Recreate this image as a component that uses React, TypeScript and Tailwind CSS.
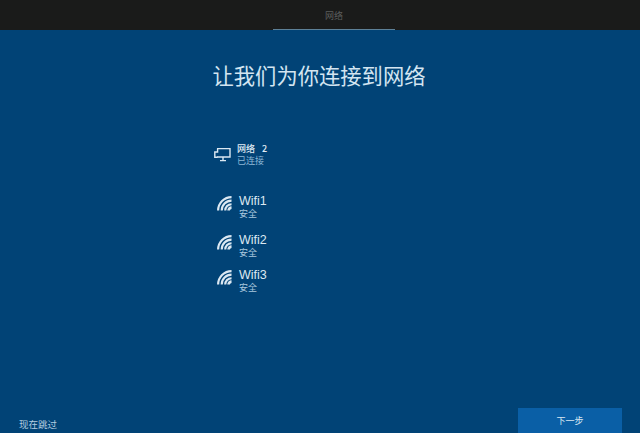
const font = { cjk: "font-['Noto_Sans_CJK_SC','Liberation_Sans',sans-serif]" }

const WifiIcon = () => (
    <svg width="15" height="15" viewBox="0 0 16 16" fill="none" stroke="#dbe8f2" strokeWidth="2.3" className="shrink-0 mt-[1px]">
        <path d="M1.2 15.5A14.3 14.3 0 0 1 15.5 1.2" />
        <path d="M5 15.5A10.5 10.5 0 0 1 15.5 5" />
        <path d="M8.8 15.5A6.7 6.7 0 0 1 15.5 8.8" />
        <path d="M12.4 15.5A3.1 3.1 0 0 1 15.5 12.4" strokeWidth="2.9" />
    </svg>
)

const MonitorIcon = () => (
    <svg width="17" height="15" viewBox="0 0 17 15" fill="none" stroke="#dbe8f2" strokeWidth="1.4" className="shrink-0">
        <path d="M3 1.6H16V10H3" />
        <path d="M3.6 1.6V5H0.8V10.2H3.6" />
        <path d="M9 10V13.4M6 13.6H12" />
    </svg>
)

const networks = [
    { name: 'Wifi1', status: '安全', gap: 'mt-0' },
    { name: 'Wifi2', status: '安全', gap: 'mt-[14px]' },
    { name: 'Wifi3', status: '安全', gap: 'mt-[10px]' },
]

const App = () => {
    return (
        <div className={`w-[640px] h-[433px] flex flex-col overflow-hidden bg-[#014376] ${font.cjk}`}>
            <header className="h-[30px] shrink-0 bg-[#1a1b1a] flex justify-center pl-[28px]">
                <div className="w-[122px] h-full flex items-center justify-center pt-[3px] border-b border-[#5d8097]">
                    <span className="text-[9px] text-[#5c5e5d]">网络</span>
                </div>
            </header>

            <main className="flex-1 flex flex-col">
                <h1 className="mt-[31px] text-center text-[21.3px] leading-[28px] pr-[2px] text-[#d3e5f1] font-normal">
                    让我们为你连接到网络
                </h1>

                <div className="mt-[53px] pl-[214px] flex flex-col">
                    <div className="flex items-center gap-[6px] h-[25px]">
                        <MonitorIcon />
                        <div className="flex flex-col">
                            <span className="text-[9px] leading-[13px] text-[#e2edf5] font-medium flex gap-[7px]">
                                <span>网络</span>
                                <span>2</span>
                            </span>
                            <span className="text-[9px] leading-[12px] text-[#8db8d6]">已连接</span>
                        </div>
                    </div>

                    <div className="mt-[28px] flex flex-col">
                        {networks.map((n) => (
                            <div key={n.name} className={`flex items-start gap-[7px] pl-[3px] h-[25px] ${n.gap}`}>
                                <WifiIcon />
                                <div className="flex flex-col">
                                    <span className="text-[12.5px] leading-[13px] text-[#dce8f1] font-['Liberation_Sans',sans-serif]">{n.name}</span>
                                    <span className="text-[9px] leading-[11px] text-[#a9c8de]">{n.status}</span>
                                </div>
                            </div>
                        ))}
                    </div>
                </div>

                <footer className="mt-auto pl-[19px] pr-[18px] flex items-end justify-between">
                    <span className="text-[9.5px] leading-[12px] mb-[3px] text-[#b3cde0]">现在跳过</span>
                    <button className="w-[104px] h-[25px] bg-[#0a5fa6] text-[9px] text-[#d9e8f3]">下一步</button>
                </footer>
            </main>
        </div>
    )
}

export default App;
